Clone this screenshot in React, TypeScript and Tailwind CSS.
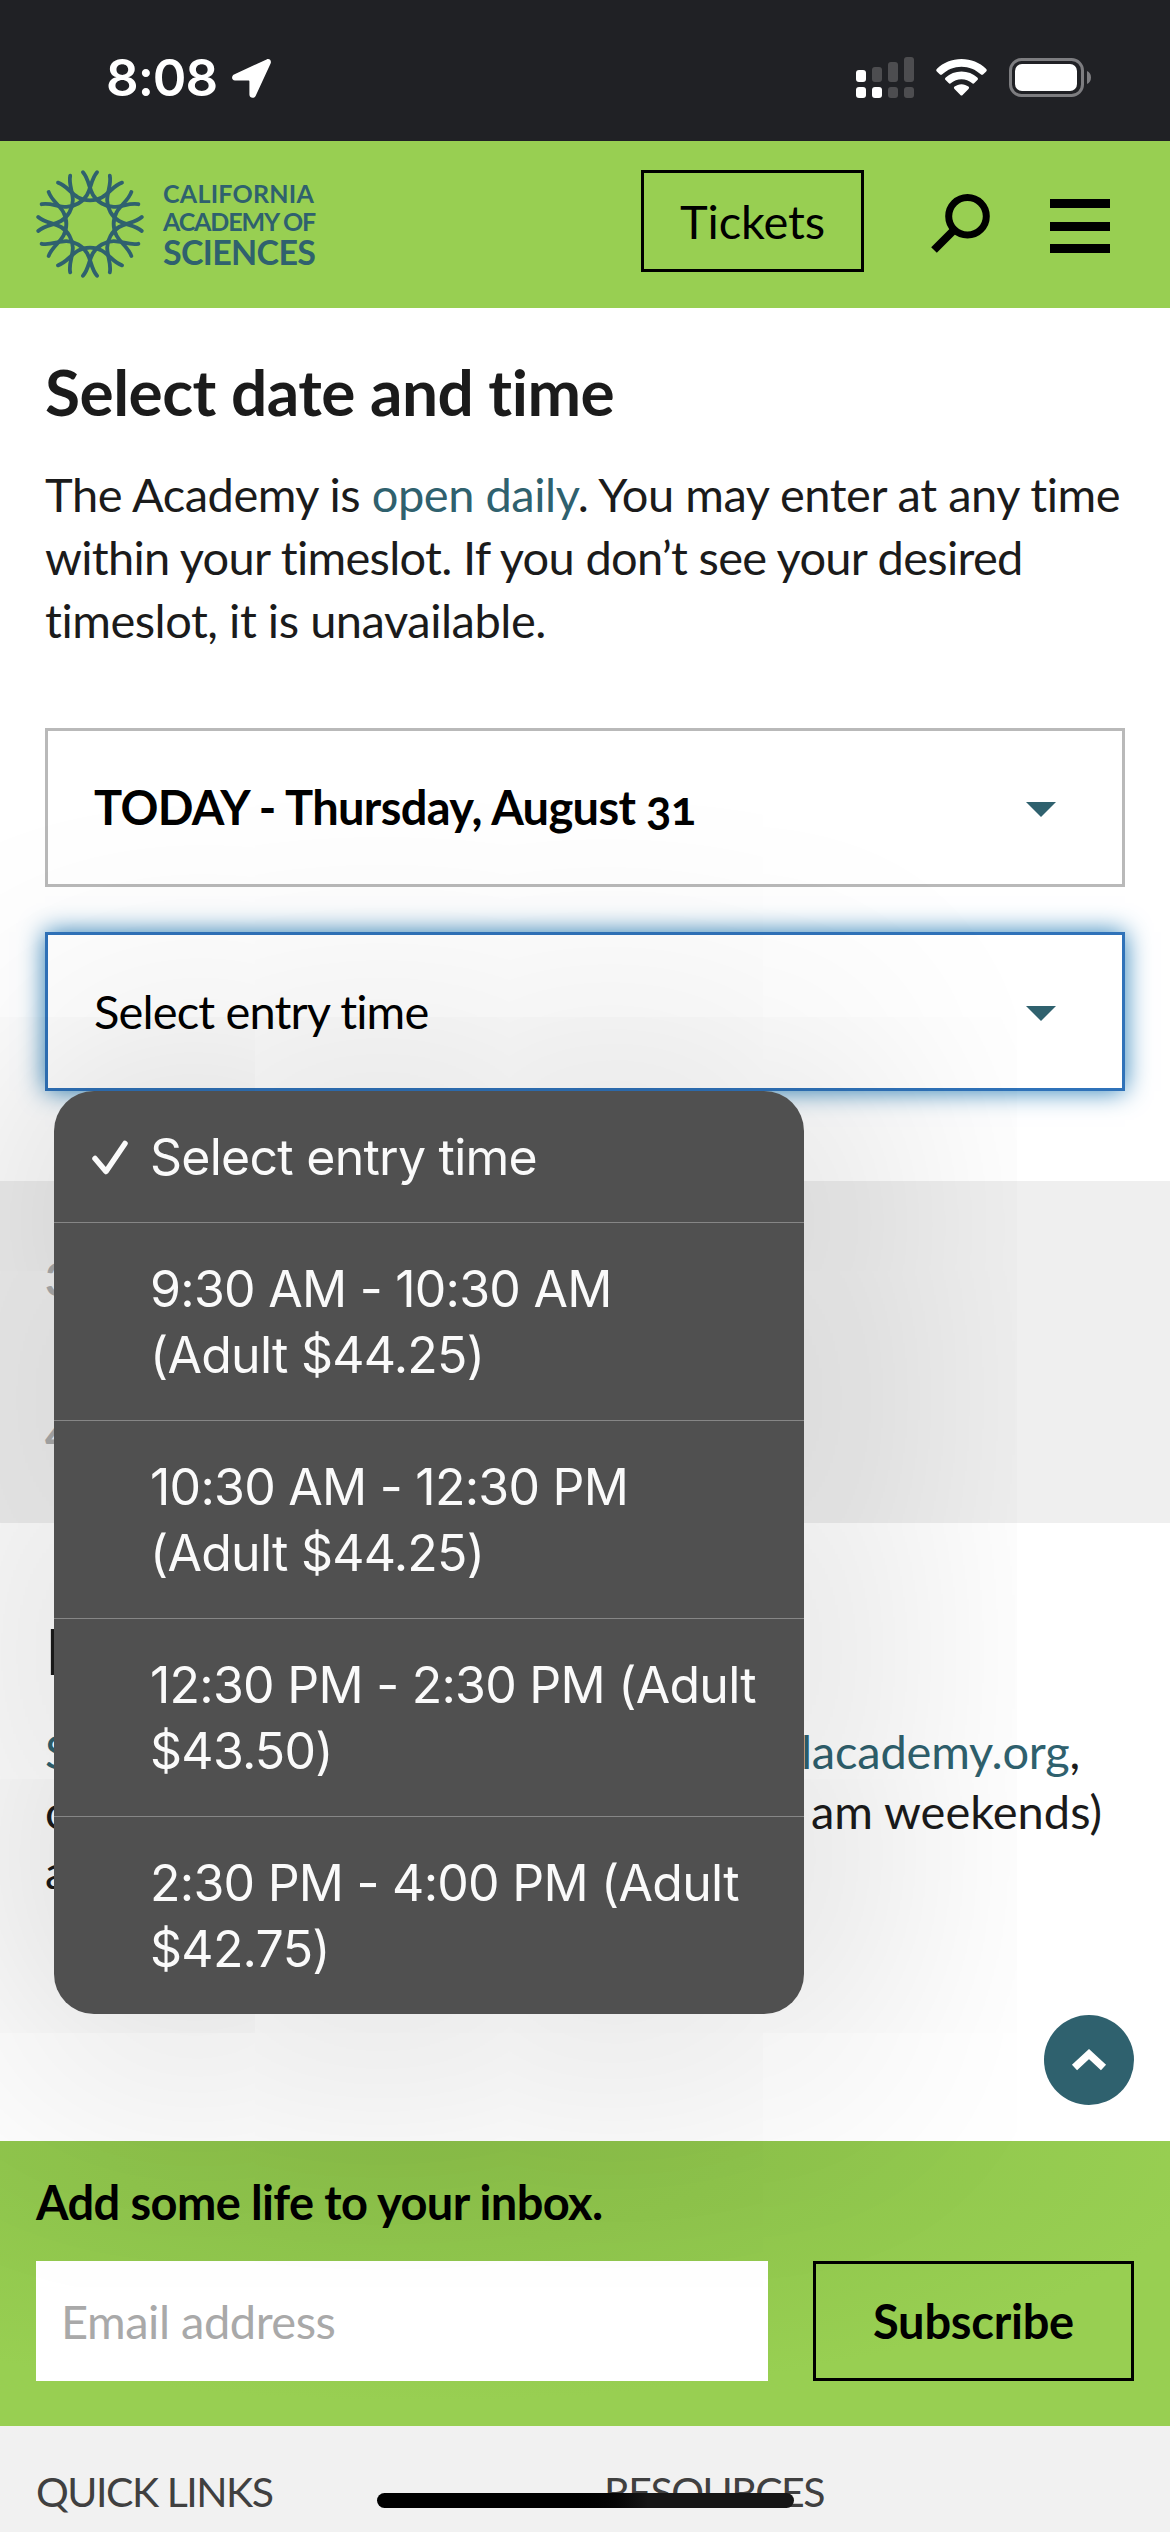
import React, { useState } from 'react';

const timeslots = [
  'Select entry time',
  '9:30 AM - 10:30 AM\n(Adult $44.25)',
  '10:30 AM - 12:30 PM\n(Adult $44.25)',
  '12:30 PM - 2:30 PM (Adult\n$43.50)',
  '2:30 PM - 4:00 PM (Adult\n$42.75)',
];

const petals = [0, 30, 60, 90, 120, 150, 180, 210, 240, 270, 300, 330];

const StatusBar: React.FC = () => (
  <div className="flex h-[141px] items-start bg-[#202125] pl-[106px] text-white">
    <span className="mt-[47px] w-[113px] font-['Inter',sans-serif] text-[51px] leading-[62px] font-semibold tracking-[-0.02em] whitespace-nowrap">8:08</span>
    <svg className="mt-[59px] ml-[13px] h-[39px] w-[39px]" viewBox="0 0 39 39" fill="currentColor">
      <path d="M34.6.4 2 15.4C-1 17 -.4 21.6 3 21.6H16.4C17 21.6 17.4 22 17.4 22.6V35.6C17.4 39.2 22 40 23.6 37L38.6 4.4C39.8 1.6 37.400-.8 34.600.4Z" />
    </svg>
    <svg className="mt-[57px] ml-[585px] h-[41px] w-[58px]" viewBox="0 0 58 41">
      <g fill="#fff">
        <rect x="0" y="13" width="10" height="12" rx="3" />
        <rect x="0" y="30" width="10" height="11" rx="3" />
        <rect x="16" y="30" width="10" height="11" rx="3" />
      </g>
      <g fill="#4d4d50">
        <rect x="16" y="10" width="10" height="15" rx="3" />
        <rect x="32" y="5" width="10" height="20" rx="3" />
        <rect x="48" y="0" width="10" height="25" rx="3" />
        <rect x="32" y="30" width="10" height="11" rx="3" />
        <rect x="48" y="30" width="10" height="11" rx="3" />
      </g>
    </svg>
    <svg className="mt-[59px] ml-[22px] h-[37px] w-[51px]" viewBox="0 0 51 37" fill="currentColor">
      <path d="M25.500 0C16 0 7.400 3.600 1 9.700C0 10.600 0 11.600.800 12.400L3.700 15.300C4.500 16.100 5.500 16 6.300 15.300C11.400 10.500 18 7.700 25.500 7.700S39.600 10.500 44.700 15.300C45.500 16 46.500 16.100 47.300 15.300L50.200 12.400C51 11.600 51 10.600 50 9.700C43.600 3.600 35 0 25.500 0Z" />
      <path d="M25.500 12.500C19.400 12.500 13.900 14.800 9.700 18.500C8.800 19.300 8.800 20.300 9.600 21.100L12.600 24.100C13.300 24.800 14.300 24.800 15.100 24.100C17.900 21.700 21.500 20.200 25.500 20.200S33.100 21.700 35.900 24.100C36.700 24.800 37.700 24.800 38.400 24.100L41.400 21.100C42.200 20.300 42.200 19.300 41.300 18.500C37.100 14.800 31.600 12.500 25.500 12.500Z" />
      <path d="M25.500 25.200C22.900 25.200 20.500 26.100 18.600 27.600C17.700 28.300 17.700 29.300 18.500 30.100L24.400 36C25.100 36.700 25.900 36.700 26.600 36L32.500 30.100C33.300 29.300 33.300 28.300 32.400 27.600C30.500 26.100 28.100 25.200 25.500 25.200Z" />
    </svg>
    <svg className="mt-[58px] ml-[22px] h-[39px] w-[82px]" viewBox="0 0 82 39">
      <rect x="1.500" y="1.500" width="72" height="36" rx="11" fill="none" stroke="#7d7d80" strokeWidth="3" />
      <rect x="6" y="6" width="62" height="27" rx="7" fill="#fff" />
      <path d="M78 13C80.500 14 82 16.500 82 19.500S80.500 25 78 26Z" fill="#7d7d80" />
    </svg>
  </div>
);

const Logo: React.FC = () => (
  <div className="flex items-start text-[#2f616e]">
    <svg className="h-[112px] w-[112px]" viewBox="-168 -168 336 336" fill="none" stroke="currentColor" strokeWidth="11.500" strokeLinecap="round">
      {petals.map((angle) => (
        <path key={angle} transform={`rotate(${angle})`} d="M-96-124C-60-112-50-71 0-71C50-71 60-112 96-124" />
      ))}
    </svg>
    <div className="mt-[11px] ml-[17px] text-[25px] leading-[28px] font-bold whitespace-nowrap">
      <div className="tracking-[0.01em]">CALIFORNIA</div>
      <div className="tracking-[-0.045em]">ACADEMY OF</div>
      <div className="mt-[1px] text-[34px] leading-[32px] tracking-[-0.02em]">SCIENCES</div>
    </div>
  </div>
);

const Header: React.FC = () => (
  <header className="flex h-[167px] items-start bg-[#98cf52] pt-[27px] pl-[34px]">
    <Logo />
    <button className="mt-[2px] ml-auto h-[102px] w-[223px] border-[3px] border-black pt-[1px] text-[47px] tracking-[-0.002em] text-black">Tickets</button>
    <svg className="mt-[26px] ml-[66px] h-[62px] w-[62px]" viewBox="0 0 62 62" fill="none" stroke="#000">
      <circle cx="37.500" cy="22.300" r="18.800" strokeWidth="7" />
      <path d="M24 36 4 56" strokeWidth="8" />
      <path d="M25 34 19 40" strokeWidth="5" />
    </svg>
    <div className="mt-[31px] mr-[60px] ml-[58px] flex w-[60px] flex-col gap-[13.500px]">
      <div className="h-[9px] bg-black" />
      <div className="h-[9px] bg-black" />
      <div className="h-[9px] bg-black" />
    </div>
  </header>
);

const Caret: React.FC = () => (
  <svg className="mt-[4px] h-[15px] w-[30px]" viewBox="0 0 30 15">
    <path d="M0 0H30L15 15Z" fill="#2f616e" />
  </svg>
);

const TimeMenu: React.FC<{ selected: string; onSelect: (slot: string) => void }> = ({ selected, onSelect }) => (
  <ul className="absolute top-[156px] left-[6px] z-10 w-[750px] divide-y divide-[#868686] rounded-[40px] bg-[#505050] font-['Inter',sans-serif] text-[50px] leading-[66px] tracking-[-0.015em] text-[#fafafa] shadow-[0_0_256px_60px_rgba(0,0,0,0.14)]">
    {timeslots.map((slot) => (
      <li key={slot} className="flex pt-[33px] pb-[32px] pl-[38px]" onClick={() => onSelect(slot)}>
        <svg className="mt-[16px] h-[36px] w-[37px] shrink-0" viewBox="0 0 37 36">
          {slot === selected && (
            <path d="M3 18.500 14 31.500 33 3.500" fill="none" stroke="currentColor" strokeWidth="5.500" strokeLinecap="round" strokeLinejoin="round" />
          )}
        </svg>
        <span className="ml-[21px] whitespace-pre">{slot}</span>
      </li>
    ))}
  </ul>
);

const App: React.FC = () => {
  const [selected, setSelected] = useState('Select entry time');

  return (
    <div className="relative h-[2532px] w-[1170px] overflow-hidden bg-white font-['Lato',sans-serif] text-[47px] text-[#1b1b1b]">
      <StatusBar />
      <Header />

      <main className="px-[45px]">
        <h1 className="pt-[44px] text-[64px] leading-[80px] font-bold tracking-[-0.008em]">Select date and time</h1>
        <p className="mt-[31px] h-[189px] leading-[63px] tracking-[-0.01em] whitespace-nowrap">
          The Academy is <a className="text-[#2f616e]">open daily</a>. You may enter at any time
          <br />
          <span className="tracking-[-0.015em]">within your timeslot. If you don’t see your desired</span>
          <br />
          timeslot, it is unavailable.
        </p>

        <div className="mt-[76px] flex h-[159px] items-center justify-between border-[3px] border-[#b9b9b9] pr-[66px] pl-[46px] font-bold text-black">
          <span className="tracking-[-0.014em] oldstyle-nums">TODAY - Thursday, August 31</span>
          <Caret />
        </div>

        <div className="relative mt-[45px] flex h-[159px] items-center justify-between border-[3px] border-[#2f72b9] pr-[66px] pl-[46px] text-black shadow-[0_0_24px_#2a7fb8]">
          <span className="tracking-[-0.018em]">{selected}</span>
          <Caret />
          <TimeMenu selected={selected} onSelect={setSelected} />
        </div>
      </main>

      <ol className="mt-[90px] h-[342px] bg-[#efefef] px-[45px] pt-[65px] text-[46px] leading-[66px] font-bold text-[#aaa]">
        <li>3</li>
        <li className="mt-[90px]">4</li>
      </ol>

      <section className="h-[618px] pt-[88px] pr-[68px] pl-[45px] leading-[60px]">
        <h2 className="text-[64px] leading-[80px]">Help</h2>
        <div className="mt-[30px] flex justify-between">
          <a className="text-[#2f616e]">Send to info@ca</a>
          <span className="mr-[22px] tracking-[-0.004em]">
            <a className="text-[#2f616e]">lacademy.org</a>,
          </span>
        </div>
        <div className="flex justify-between">
          <span>call (9 am weekdays,</span>
          <span>am weekends)</span>
        </div>
        <div>and holidays</div>
      </section>

      <section className="h-[285px] bg-[#98cf52] bg-[radial-gradient(ellipse_800px_260px_at_36%_0%,#8bc049_0%,#8fc54c_40%,#98cf52_100%)] px-[36px] pt-[31px] text-black">
        <h3 className="h-[89px] leading-[60px] font-bold tracking-[-0.013em]">Add some life to your inbox.</h3>
        <div className="flex justify-between">
          <div className="flex h-[120px] w-[732px] items-center bg-white pl-[25px] tracking-[-0.01em] text-[#a9a9a9]">Email address</div>
          <button className="h-[120px] w-[321px] border-[3px] border-black font-bold tracking-[-0.005em]">Subscribe</button>
        </div>
      </section>

      <footer className="grid h-[106px] grid-cols-[568px_1fr] bg-[#f1f1f1] pt-[41px] pl-[36px] text-[41px] leading-[50px] tracking-[-0.036em] text-[#404040]">
        <div>QUICK LINKS</div>
        <div>RESOURCES</div>
      </footer>

      <button className="absolute top-[2015px] left-[1044px] flex h-[90px] w-[90px] items-center justify-center rounded-full bg-[#2f616e]" aria-label="Back to top">
        <svg className="h-[24px] w-[36px]" viewBox="0 0 36 24">
          <path d="M3.500 19.500 18 6 32.500 19.500" fill="none" stroke="#fff" strokeWidth="7.500" />
        </svg>
      </button>
      <div className="absolute top-[2493px] left-[377px] h-[15px] w-[417px] rounded-full bg-linear-to-r from-black from-45% to-[#161616] to-65%" />
    </div>
  );
};

export default App;
